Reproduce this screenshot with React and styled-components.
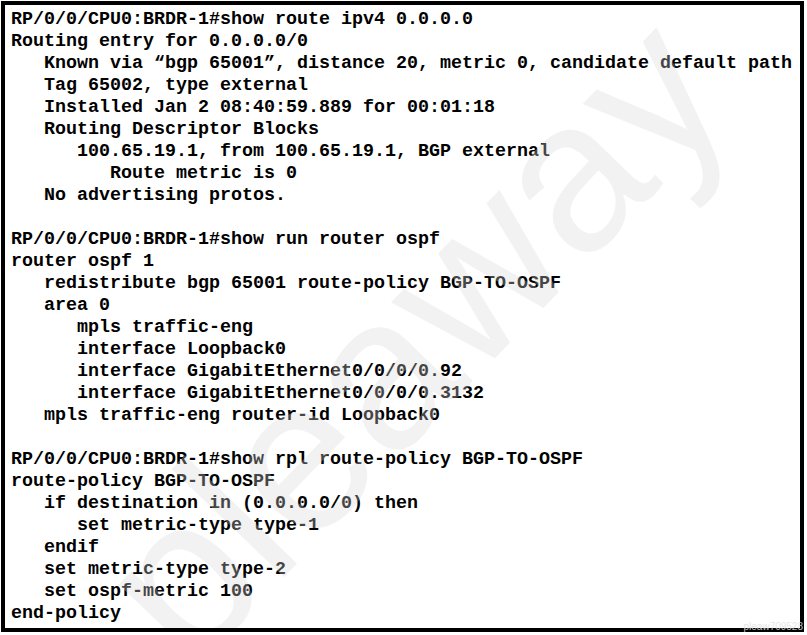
import React from 'react'
import styled, { createGlobalStyle } from 'styled-components'

const GlobalStyle = createGlobalStyle`
  html, body {
    margin: 0;
    padding: 0;
    background: #fff;
  }
`

const sections = [
  [
    [0, 'RP/0/0/CPU0:BRDR-1#show route ipv4 0.0.0.0'],
    [0, 'Routing entry for 0.0.0.0/0'],
    [1, 'Known via \u201Cbgp 65001\u201D, distance 20, metric 0, candidate default path'],
    [1, 'Tag 65002, type external'],
    [1, 'Installed Jan 2 08:40:59.889 for 00:01:18'],
    [1, 'Routing Descriptor Blocks'],
    [2, '100.65.19.1, from 100.65.19.1, BGP external'],
    [3, 'Route metric is 0'],
    [1, 'No advertising protos.'],
  ],
  [
    [0, 'RP/0/0/CPU0:BRDR-1#show run router ospf'],
    [0, 'router ospf 1'],
    [1, 'redistribute bgp 65001 route-policy BGP-TO-OSPF'],
    [1, 'area 0'],
    [2, 'mpls traffic-eng'],
    [2, 'interface Loopback0'],
    [2, 'interface GigabitEthernet0/0/0/0.92'],
    [2, 'interface GigabitEthernet0/0/0/0.3132'],
    [1, 'mpls traffic-eng router-id Loopback0'],
  ],
  [
    [0, 'RP/0/0/CPU0:BRDR-1#show rpl route-policy BGP-TO-OSPF'],
    [0, 'route-policy BGP-TO-OSPF'],
    [1, 'if destination in (0.0.0.0/0) then'],
    [2, 'set metric-type type-1'],
    [1, 'endif'],
    [1, 'set metric-type type-2'],
    [1, 'set ospf-metric 100'],
    [0, 'end-policy'],
  ],
]

const App = () => {
  return (
    <>
      <GlobalStyle />
      <Page>
        <Frame>
          <Output>
            {sections.map((lines, i) => (
              <Section key={i}>
                {lines.map(([indent, text], j) => (
                  <Line key={j} indent={indent}>{text}</Line>
                ))}
              </Section>
            ))}
          </Output>
          <Overlay>
            <Watermark>pleaway</Watermark>
          </Overlay>
        </Frame>
        <Stamp>pleaw709528</Stamp>
      </Page>
    </>
  )
}

export default App

const Page = styled.div`
  position: relative;
  width: 807px;
  height: 635px;
  overflow: hidden;
  padding: 1px 0 0 1px;
  box-sizing: border-box;
`

const Frame = styled.div`
  position: relative;
  box-sizing: border-box;
  width: 803px;
  height: 631px;
  border: 4px solid #000;
  background: #fff;
`

const Output = styled.div`
  display: flex;
  flex-direction: column;
  gap: 22px;
  padding: 4px 0 0 6px;
  font-family: "Liberation Mono", "Courier New", monospace;
  font-weight: bold;
  font-size: 18.33px;
  line-height: 22px;
  color: #000;
`

const Section = styled.div`
  display: flex;
  flex-direction: column;
`

const Line = styled.div`
  white-space: pre;
  padding-left: ${props => props.indent * 33}px;
`

const Overlay = styled.div`
  position: absolute;
  inset: 0;
  overflow: hidden;
  pointer-events: none;
`

const Watermark = styled.div`
  position: absolute;
  left: 406px;
  top: 333px;
  transform: translate(-50%, -50%) rotate(-46deg);
  font-family: "Liberation Sans", Arial, sans-serif;
  font-size: 215px;
  line-height: 1;
  color: rgba(215, 215, 215, 0.32);
  white-space: nowrap;
`

const Stamp = styled.div`
  position: absolute;
  right: 4px;
  top: 622px;
  font-family: "Liberation Sans", Arial, sans-serif;
  font-size: 10px;
  line-height: 10px;
  color: rgba(225, 225, 225, 0.85);
  pointer-events: none;
`
